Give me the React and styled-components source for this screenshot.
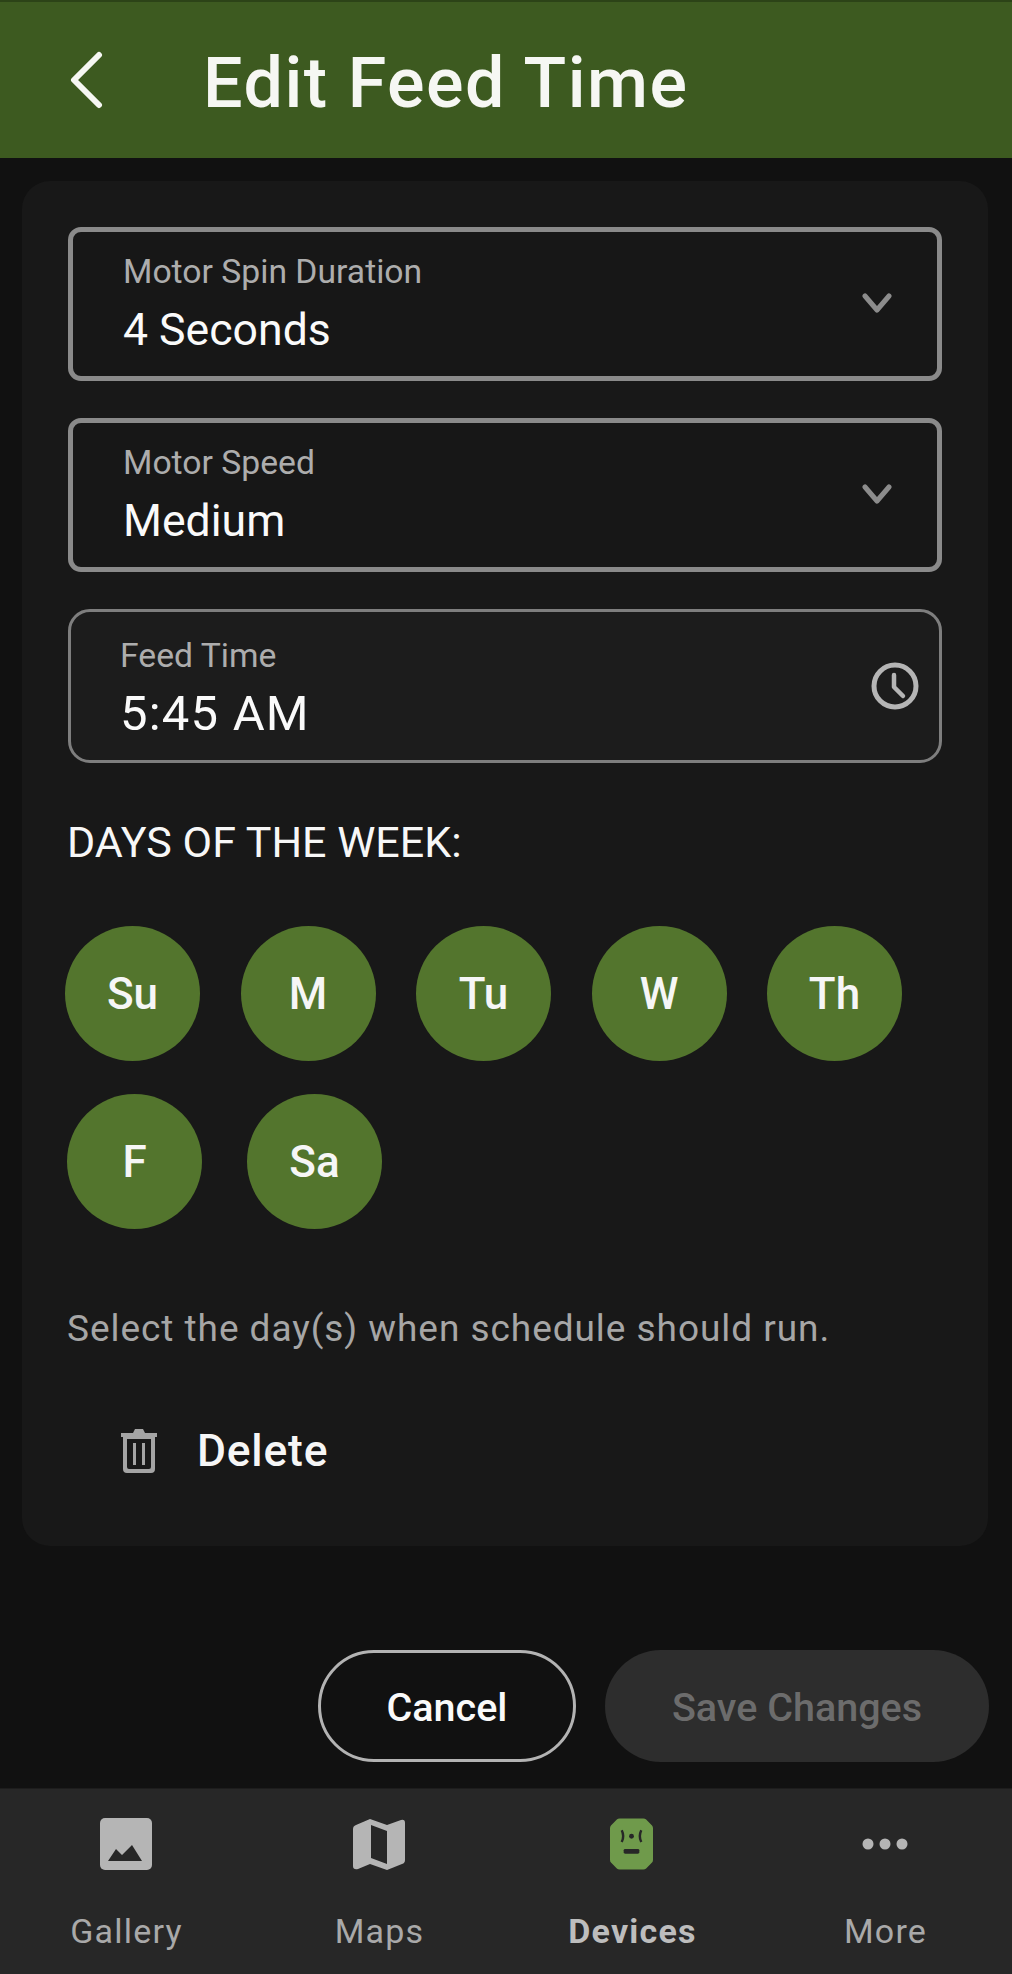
import React from "react";
import styled, { createGlobalStyle } from "styled-components";

const GlobalStyle = createGlobalStyle`
  * { box-sizing: border-box; }
  html, body { margin: 0; padding: 0; background: #111111; }
  body { font-family: Roboto, "Liberation Sans", sans-serif; color: #fff; }
`;

const Page = styled.div`
  width: 1012px;
  height: 1974px;
  display: flex;
  flex-direction: column;
  background: #111111;
  overflow: hidden;
`;

const Header = styled.header`
  height: 158px;
  flex: none;
  display: flex;
  align-items: center;
  padding-left: 68px;
  background: #3d5a20;
  border-top: 2px solid #2c4317;
`;

const BackButton = styled.div`
  width: 135px;
  height: 60px;
  display: flex;
  align-items: center;
`;

const Title = styled.h1`
  margin: 5px 0 0;
  font-size: 70px;
  font-weight: 500;
  letter-spacing: 1.55px;
  line-height: 1;
  color: #f6f7f3;
`;

const Card = styled.section`
  margin: 23px 24px 0 22px;
  height: 1365px;
  flex: none;
  padding: 46px 46px 0 45px;
  border-radius: 28px;
  background: #181818;
`;

const Field = styled.div`
  height: 154px;
  margin: 0 0 ${(p) => p.$mb || 37}px 1px;
  display: flex;
  align-items: center;
  justify-content: space-between;
  padding: ${(p) => (p.$time ? "0 20px 0 49px" : "0 45px 3px 50px")};
  border: ${(p) => (p.$time ? "3px solid #7e7e7e" : "5px solid #8a8a8a")};
  border-radius: ${(p) => (p.$time ? 22 : 13)}px;
  background: ${(p) => (p.$time ? "#1c1c1c" : "#171717")};
`;

const FieldText = styled.div`
  display: flex;
  flex-direction: column;
`;

const FieldLabel = styled.span`
  font-size: 33.7px;
  line-height: 40px;
  color: #adadad;
`;

const FieldValue = styled.span`
  margin-top: 15px;
  font-size: ${(p) => (p.$time ? 49 : 44.6)}px;
  line-height: 46px;
  letter-spacing: ${(p) => (p.$time ? 1.2 : 0)}px;
  color: #fafafa;
`;

const DaysHeading = styled.h2`
  margin: 0 0 61px;
  font-size: 43px;
  font-weight: 400;
  line-height: 46px;
  color: #f7f7f7;
`;

const DayRow = styled.div`
  display: flex;
  gap: ${(p) => p.$gap}px;
  margin: 0 0 ${(p) => p.$mb}px ${(p) => p.$ml}px;
`;

const Day = styled.div`
  width: 135px;
  height: 135px;
  border-radius: 50%;
  display: flex;
  align-items: center;
  justify-content: center;
  background: #53752d;
  font-size: 44px;
  font-weight: 500;
  color: #f6f6f6;
`;

const Help = styled.p`
  margin: 0 0 73px;
  font-size: 37px;
  line-height: 46px;
  letter-spacing: 0.95px;
  color: #a6a6a6;
`;

const DeleteRow = styled.div`
  display: flex;
  align-items: center;
  gap: 40px;
  padding-left: 54px;
`;

const DeleteText = styled.span`
  font-size: 44.4px;
  font-weight: 500;
  letter-spacing: 0.8px;
  color: #f6f6f6;
`;

const Actions = styled.div`
  display: flex;
  justify-content: flex-end;
  gap: 29px;
  margin-top: 104px;
  padding-right: 23px;
`;

const ActionButton = styled.div`
  width: ${(p) => (p.$save ? 384 : 258)}px;
  height: 112px;
  display: flex;
  align-items: center;
  justify-content: center;
  padding-top: 2px;
  border-radius: 56px;
  border: ${(p) => (p.$save ? "none" : "3px solid #b3b3b3")};
  background: ${(p) => (p.$save ? "#2d2d2d" : "#111111")};
  color: ${(p) => (p.$save ? "#6c6c6c" : "#fafafa")};
  font-size: 39.5px;
  font-weight: 500;
`;

const Nav = styled.nav`
  margin-top: auto;
  height: 186px;
  flex: none;
  display: grid;
  grid-template-columns: repeat(4, 253px);
  background: #272727;
  border-top: 1px solid #1d1d1d;
`;

const NavItem = styled.div`
  display: flex;
  flex-direction: column;
  align-items: center;
  padding-top: 28px;
`;

const NavIcon = styled.div`
  height: 54px;
  margin-right: 2px;
  display: flex;
  align-items: center;
  justify-content: center;
`;

const NavLabel = styled.span`
  margin-top: 40px;
  font-size: 34px;
  line-height: 40px;
  letter-spacing: 1.2px;
  font-weight: ${(p) => (p.$active ? 700 : 400)};
  color: ${(p) => (p.$active ? "#bdbdbd" : "#a9a9a9")};
`;

const Chevron = () => (
  <svg width="30" height="22" viewBox="0 0 30 22" fill="none">
    <path d="M3 4l12 14L27 4" stroke="#8c8c8c" strokeWidth="5" strokeLinecap="round" strokeLinejoin="round" />
  </svg>
);

const ClockIcon = () => (
  <svg width="48" height="48" viewBox="0 0 48 48" fill="none">
    <circle cx="24" cy="24" r="21" stroke="#b5b5b5" strokeWidth="5" />
    <path d="M23 13v12l9 9" stroke="#b5b5b5" strokeWidth="4.5" strokeLinecap="round" strokeLinejoin="round" />
  </svg>
);

const TrashIcon = () => (
  <svg width="36" height="44" viewBox="0 0 36 44" fill="none">
    <path d="M0 4h12l2-4h8l2 4h12v4H0z" fill="#a4a4a4" />
    <path d="M2 8h32v32a4 4 0 0 1-4 4H6a4 4 0 0 1-4-4zM6 10v28a2 2 0 0 0 2 2h20a2 2 0 0 0 2-2V10z" fill="#a4a4a4" fillRule="evenodd" />
    <path d="M13.5 14v22M22.5 14v22" stroke="#a4a4a4" strokeWidth="3" />
  </svg>
);

const GalleryIcon = () => (
  <svg width="52" height="52" viewBox="0 0 52 52">
    <rect width="52" height="52" rx="5" fill="#b5b5b5" />
    <path d="M8 43l8-12 6 6 10-10 10 16z" fill="#272727" />
  </svg>
);

const MapIcon = () => (
  <svg width="52" height="52" viewBox="0 0 52 52">
    <path
      fillRule="evenodd"
      fill="#b5b5b5"
      d="M17 1l17 6 14-5q4-1 4 3v37q0 3-3 4L34 52 17 46 5 51q-5 1-5-3V11q0-3 3-4zM18 7v33l16 6V13z"
    />
  </svg>
);

const DeviceIcon = () => (
  <svg width="43" height="52" viewBox="0 0 44 52">
    <path d="M10 0h24q2 0 3 1l6 6q1 1 1 3v32q0 2-1 3l-6 6q-1 1-3 1H10q-2 0-3-1l-6-6q-1-1-1-3V10q0-2 1-3l6-6q1-1 3-1z" fill="#6f9a4b" />
    <circle cx="22" cy="18" r="2.5" fill="#272727" />
    <path d="M12 12q3 6 0 12M32 12q-3 6 0 12" stroke="#272727" strokeWidth="2.5" fill="none" />
    <rect x="14" y="31" width="16" height="5" rx="1.5" fill="#272727" />
  </svg>
);

const MoreIcon = () => (
  <svg width="46" height="14" viewBox="0 0 46 14">
    <circle cx="6" cy="7" r="5.5" fill="#b5b5b5" />
    <circle cx="23" cy="7" r="5.5" fill="#b5b5b5" />
    <circle cx="40" cy="7" r="5.5" fill="#b5b5b5" />
  </svg>
);

const firstRow = ["Su", "M", "Tu", "W", "Th"];
const secondRow = ["F", "Sa"];

const navItems = [
  { label: "Gallery", icon: <GalleryIcon /> },
  { label: "Maps", icon: <MapIcon /> },
  { label: "Devices", icon: <DeviceIcon />, active: true },
  { label: "More", icon: <MoreIcon /> },
];

const App = () => {
  return (
    <Page>
      <GlobalStyle />
      <Header>
        <BackButton>
          <svg width="36" height="58" viewBox="0 0 36 58" fill="none">
            <path d="M31 4L6 29l25 25" stroke="#f6f7f3" strokeWidth="6" strokeLinecap="round" strokeLinejoin="round" />
          </svg>
        </BackButton>
        <Title>Edit Feed Time</Title>
      </Header>

      <Card>
        <Field>
          <FieldText>
            <FieldLabel>Motor Spin Duration</FieldLabel>
            <FieldValue>4 Seconds</FieldValue>
          </FieldText>
          <Chevron />
        </Field>
        <Field>
          <FieldText>
            <FieldLabel>Motor Speed</FieldLabel>
            <FieldValue>Medium</FieldValue>
          </FieldText>
          <Chevron />
        </Field>
        <Field $time $mb={56}>
          <FieldText>
            <FieldLabel>Feed Time</FieldLabel>
            <FieldValue $time>5:45 AM</FieldValue>
          </FieldText>
          <ClockIcon />
        </Field>

        <DaysHeading>DAYS OF THE WEEK:</DaysHeading>
        <DayRow $gap={40.5} $ml={-2} $mb={33}>
          {firstRow.map((d) => (
            <Day key={d}>{d}</Day>
          ))}
        </DayRow>
        <DayRow $gap={45} $ml={0} $mb={77}>
          {secondRow.map((d) => (
            <Day key={d}>{d}</Day>
          ))}
        </DayRow>

        <Help>Select the day(s) when schedule should run.</Help>

        <DeleteRow>
          <TrashIcon />
          <DeleteText>Delete</DeleteText>
        </DeleteRow>
      </Card>

      <Actions>
        <ActionButton>Cancel</ActionButton>
        <ActionButton $save>Save Changes</ActionButton>
      </Actions>

      <Nav>
        {navItems.map((item) => (
          <NavItem key={item.label}>
            <NavIcon>{item.icon}</NavIcon>
            <NavLabel $active={item.active}>{item.label}</NavLabel>
          </NavItem>
        ))}
      </Nav>
    </Page>
  );
};

export default App;
